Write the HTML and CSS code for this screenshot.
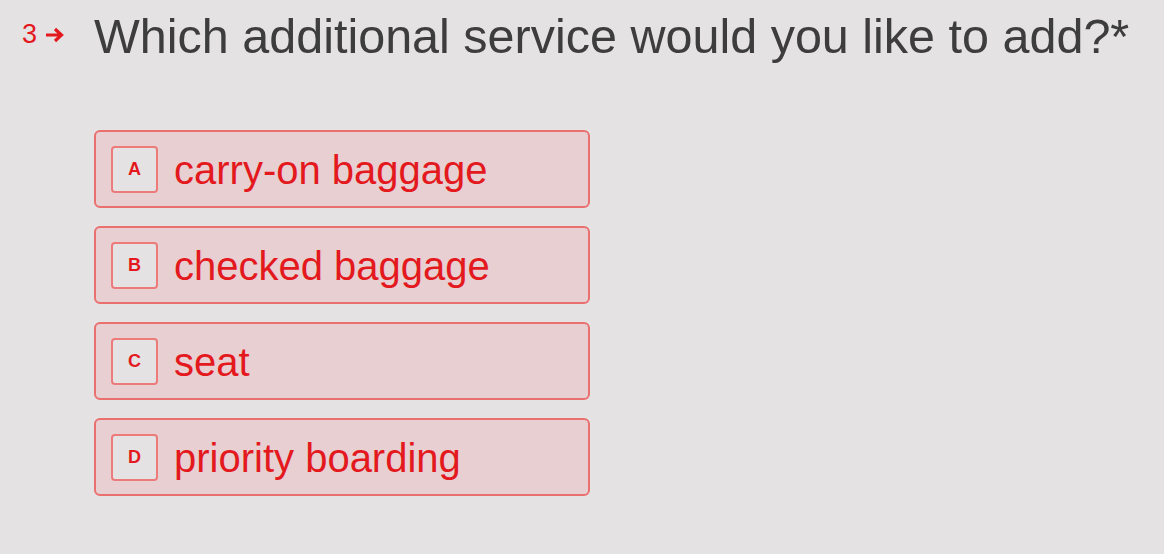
FILE: index.html
```html
<!DOCTYPE html>
<html lang="en">
<head>
    <meta charset="UTF-8">
    <meta name="viewport" content="width=device-width, initial-scale=1.0">
    <title>Additional service</title>
    <link rel="stylesheet" href="styles.css">
</head>
<body>
    <div class="question">
        <div class="q-number">
            <span>3</span>
            <svg class="q-arrow" width="20" height="16" viewBox="0 0 20 16">
                <path d="M1 8 H16 M10 2 L16.5 8 L10 14" fill="none" stroke="#e3191e" stroke-width="3.2"/>
            </svg>
        </div>
        <h1>Which additional service would you like to add?*</h1>
    </div>

    <!-- Choices -->
    <div class="choices">
        <div class="choice"><span class="key">A</span><span class="label">carry-on baggage</span></div>
        <div class="choice"><span class="key">B</span><span class="label">checked baggage</span></div>
        <div class="choice"><span class="key">C</span><span class="label">seat</span></div>
        <div class="choice"><span class="key">D</span><span class="label">priority boarding</span></div>
    </div>
</body>
</html>
```

FILE: styles.css
```css
* {
    margin: 0;
    padding: 0;
    box-sizing: border-box;
}
body {
    font-family: 'Liberation Sans', Arial, Helvetica, sans-serif;
    background: #e4e2e3;
    color: #3d3d3d;
    width: 1164px;
    height: 554px;
    overflow: hidden;
    padding: 10px 0 0 22px;
}
.question {
    display: flex;
    align-items: flex-start;
}
.q-number {
    display: flex;
    align-items: center;
    gap: 8px;
    width: 72px;
    height: 48px;
    color: #e3191e;
    font-size: 27px;
}
.q-arrow {
    margin-top: 1px;
}
h1 {
    font-weight: normal;
    font-size: 48.5px;
    line-height: 52px;
    color: #3d3d3d;
}
.choices {
    display: flex;
    flex-direction: column;
    gap: 18px;
    margin: 68px 0 0 72px;
    width: 496px;
}
.choice {
    display: flex;
    align-items: center;
    height: 78px;
    padding-left: 15px;
    border: 2px solid #e9706f;
    border-radius: 6px;
    background: #e7cfd2;
    color: #e3191e;
    font-size: 40px;
}
.label {
    padding-top: 2px;
}
.key {
    display: flex;
    align-items: center;
    justify-content: center;
    flex-shrink: 0;
    width: 47px;
    height: 47px;
    margin-right: 16px;
    border: 2px solid #ec7b7a;
    border-radius: 4px;
    background: #e4e2e3;
    font-size: 18px;
    font-weight: bold;
}
```
